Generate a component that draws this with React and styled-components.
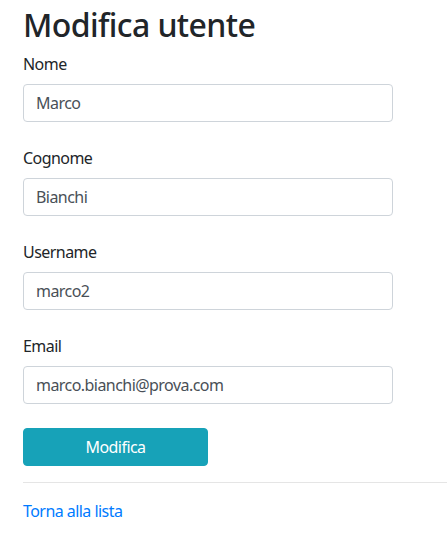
import React, { useState } from 'react';
import styled, { createGlobalStyle } from 'styled-components';

const GlobalStyle = createGlobalStyle`
  body {
    margin: 0;
    background: #fff;
    font-family: 'Noto Sans', 'Open Sans', sans-serif;
    font-size: 16px;
    line-height: 1.5;
    letter-spacing: -0.55px;
    color: #212529;
  }
  * { box-sizing: border-box; }
`;

const Page = styled.div`
  padding: 6px 0 0 23px;
`;

const Title = styled.h2`
  margin: 0 0 8px;
  font-size: 32px;
  font-weight: 500;
  line-height: 1.2;
  letter-spacing: -0.6px;
`;

const Form = styled.form`
  width: 370px;
`;

const Group = styled.div`
  margin-bottom: 24px;
`;

const Label = styled.label`
  display: block;
  margin-bottom: 8px;
`;

const Input = styled.input`
  display: block;
  width: 100%;
  height: 38px;
  padding: 6px 12px;
  font: inherit;
  letter-spacing: inherit;
  color: #495057;
  background: #fff;
  border: 1px solid #ced4da;
  border-radius: 4px;
  outline: none;
`;

const Button = styled.button`
  display: block;
  width: 185px;
  height: 38px;
  font: inherit;
  letter-spacing: inherit;
  color: #fff;
  background: #17a2b8;
  border: 1px solid #17a2b8;
  border-radius: 4px;
  cursor: pointer;
`;

const Rule = styled.hr`
  margin: 16px 0;
  border: 0;
  border-top: 1px solid rgba(0, 0, 0, 0.1);
`;

const Link = styled.a`
  color: #007bff;
  text-decoration: none;
`;

const fields = [
  { key: 'nome', label: 'Nome', type: 'text' },
  { key: 'cognome', label: 'Cognome', type: 'text' },
  { key: 'username', label: 'Username', type: 'text' },
  { key: 'email', label: 'Email', type: 'email' },
];

const App = () => {
  const [user, setUser] = useState({
    nome: 'Marco',
    cognome: 'Bianchi',
    username: 'marco2',
    email: 'marco.bianchi@prova.com',
  });

  return (
    <Page>
      <GlobalStyle />
      <Title>Modifica utente</Title>
      <Form onSubmit={(e) => e.preventDefault()}>
        {fields.map((f) => (
          <Group key={f.key}>
            <Label htmlFor={f.key}>{f.label}</Label>
            <Input
              id={f.key}
              type={f.type}
              value={user[f.key]}
              onChange={(e) => setUser({ ...user, [f.key]: e.target.value })}
            />
          </Group>
        ))}
        <Button type="submit">Modifica</Button>
      </Form>
      <Rule />
      <Link href="#">Torna alla lista</Link>
    </Page>
  );
};

export default App;
